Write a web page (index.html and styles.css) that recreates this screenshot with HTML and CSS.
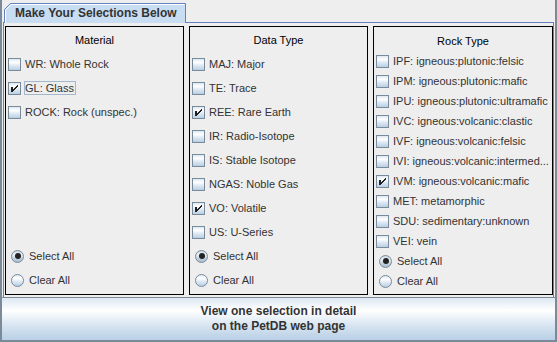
FILE: index.html
```html
<!DOCTYPE html>
<html>
<head>
<meta charset="utf-8">
<link rel="stylesheet" href="styles.css">
</head>
<body>
<div class="window">
  <div class="tabpane">
    <div class="tabrow">
      <div class="tab">
        <svg class="tab-bg" width="182" height="20" viewBox="0 0 182 20">
          <path d="M0 20 V6 L6 0 H182 V20 Z" fill="#C8DDF2"/>
          <path d="M0.5 20 V6.5 L6.5 0.5 H181.5 V20" fill="none" stroke="#6382BF" stroke-width="1"/>
          <path d="M1.5 20 V7 L7 1.5 H180.5" fill="none" stroke="#FFFFFF" stroke-width="1"/>
        </svg>
        <span class="tab-label">Make Your Selections Below</span>
      </div>
    </div>
    <div class="content">
      <section class="panel">
        <div class="ptitle">Material</div>
        <div class="row cb"><span class="box"></span><span>WR: Whole Rock</span></div>
        <div class="row cb"><span class="box"><svg class="check" width="13" height="13" viewBox="0 0 13 13"><rect x="3" y="5" width="2" height="5"/><rect x="5" y="7" width="1" height="2"/><rect x="6" y="6" width="1" height="2"/><rect x="7" y="5" width="1" height="2"/><rect x="8" y="4" width="1" height="2"/><rect x="9" y="3" width="1" height="2"/></svg></span><span class="focus">GL: Glass</span></div>
        <div class="row cb"><span class="box"></span><span>ROCK: Rock (unspec.)</span></div>
        <div class="radios">
          <div class="row rb"><span class="radio on"></span><span>Select All</span></div>
          <div class="row rb"><span class="radio"></span><span>Clear All</span></div>
        </div>
      </section>
      <section class="panel">
        <div class="ptitle">Data Type</div>
        <div class="row cb"><span class="box"></span><span>MAJ: Major</span></div>
        <div class="row cb"><span class="box"></span><span>TE: Trace</span></div>
        <div class="row cb"><span class="box"><svg class="check" width="13" height="13" viewBox="0 0 13 13"><rect x="3" y="5" width="2" height="5"/><rect x="5" y="7" width="1" height="2"/><rect x="6" y="6" width="1" height="2"/><rect x="7" y="5" width="1" height="2"/><rect x="8" y="4" width="1" height="2"/><rect x="9" y="3" width="1" height="2"/></svg></span><span>REE: Rare Earth</span></div>
        <div class="row cb"><span class="box"></span><span>IR: Radio-Isotope</span></div>
        <div class="row cb"><span class="box"></span><span>IS: Stable Isotope</span></div>
        <div class="row cb"><span class="box"></span><span>NGAS: Noble Gas</span></div>
        <div class="row cb"><span class="box"><svg class="check" width="13" height="13" viewBox="0 0 13 13"><rect x="3" y="5" width="2" height="5"/><rect x="5" y="7" width="1" height="2"/><rect x="6" y="6" width="1" height="2"/><rect x="7" y="5" width="1" height="2"/><rect x="8" y="4" width="1" height="2"/><rect x="9" y="3" width="1" height="2"/></svg></span><span>VO: Volatile</span></div>
        <div class="row cb"><span class="box"></span><span>US: U-Series</span></div>
        <div class="radios">
          <div class="row rb"><span class="radio on"></span><span>Select All</span></div>
          <div class="row rb"><span class="radio"></span><span>Clear All</span></div>
        </div>
      </section>
      <section class="panel rock">
        <div class="ptitle">Rock Type</div>
        <div class="row cb"><span class="box"></span><span>IPF: igneous:plutonic:felsic</span></div>
        <div class="row cb"><span class="box"></span><span>IPM: igneous:plutonic:mafic</span></div>
        <div class="row cb"><span class="box"></span><span>IPU: igneous:plutonic:ultramafic</span></div>
        <div class="row cb"><span class="box"></span><span>IVC: igneous:volcanic:clastic</span></div>
        <div class="row cb"><span class="box"></span><span>IVF: igneous:volcanic:felsic</span></div>
        <div class="row cb"><span class="box"></span><span>IVI: igneous:volcanic:intermed...</span></div>
        <div class="row cb"><span class="box"><svg class="check" width="13" height="13" viewBox="0 0 13 13"><rect x="3" y="5" width="2" height="5"/><rect x="5" y="7" width="1" height="2"/><rect x="6" y="6" width="1" height="2"/><rect x="7" y="5" width="1" height="2"/><rect x="8" y="4" width="1" height="2"/><rect x="9" y="3" width="1" height="2"/></svg></span><span>IVM: igneous:volcanic:mafic</span></div>
        <div class="row cb"><span class="box"></span><span>MET: metamorphic</span></div>
        <div class="row cb"><span class="box"></span><span>SDU: sedimentary:unknown</span></div>
        <div class="row cb"><span class="box"></span><span>VEI: vein</span></div>
        <div class="radios">
          <div class="row rb"><span class="radio on"></span><span>Select All</span></div>
          <div class="row rb"><span class="radio"></span><span>Clear All</span></div>
        </div>
      </section>
    </div>
  </div>
  <button class="detail">View one selection in detail<br>on the PetDB web page</button>
</div>
</body>
</html>
```

FILE: styles.css
```css
* { box-sizing: border-box; }
html, body { margin: 0; padding: 0; }
body {
  background: #EEEEEE;
  font-family: "Liberation Sans", Arial, sans-serif;
}
.window {
  width: 557px;
  height: 342px;
  background: #EEEEEE;
  border-left: 2px solid #7A8A99;
  border-right: 2px solid #7A8A99;
  border-bottom: 1px solid #7A8A99;
  display: flex;
  flex-direction: column;
  overflow: hidden;
}
.tabpane {
  padding: 0 1px;
}
.tabrow {
  height: 23px;
  padding-top: 3px;
  padding-left: 1px;
  display: flex;
  position: relative;
  z-index: 1;
}
.tab {
  position: relative;
  width: 182px;
  height: 20px;
}
.tab-bg {
  position: absolute;
  left: 0;
  top: 0;
  display: block;
}
.tab-label {
  position: relative;
  display: block;
  padding-left: 11px;
  padding-top: 1px;
  line-height: 18px;
  font-size: 12px;
  font-weight: bold;
  color: #333333;
  white-space: nowrap;
}
.content {
  margin-top: -1px;
  border-top: 1px solid #6382BF;
  border-left: 1px solid #6382BF;
  border-right: 1px solid #6382BF;
  padding: 3px 0 2px 1px;
  display: grid;
  grid-template-columns: 179px 179px 180px;
  column-gap: 5px;
}
.panel {
  height: 269px;
  border: 1px solid #000000;
  display: flex;
  flex-direction: column;
  padding: 1px 0 2px 0;
}
.panel.rock {
  padding: 4px 0 3px 0;
}
.ptitle {
  height: 24px;
  display: flex;
  align-items: center;
  justify-content: center;
  font-size: 11px;
  color: #000000;
}
.row {
  height: 24px;
  display: flex;
  align-items: center;
  font-size: 11px;
  color: #333333;
  white-space: nowrap;
}
.rock .ptitle, .rock .row {
  height: 20px;
}
.cb { padding-left: 2px; }
.rb { padding-left: 5px; }
.box {
  width: 13px;
  height: 13px;
  flex: none;
  margin-right: 4px;
  border: 1px solid #7A8A99;
  background: linear-gradient(to bottom, #DDE8F3 0%, #FFFFFF 30%, #DDE8F3 60%, #B8CFE5 100%);
  display: block;
}
.check {
  display: block;
  margin: -1px;
  fill: #222222;
  shape-rendering: crispEdges;
}
.focus {
  border: 1px solid #A3B8CC;
  margin-left: -1px;
  padding-right: 1px;
  line-height: 12px;
}
.radios {
  margin-top: auto;
}
.radio {
  width: 13px;
  height: 13px;
  flex: none;
  margin-right: 5px;
  border-radius: 50%;
  border: 1px solid #7A8A99;
  background: linear-gradient(to bottom, #DDE8F3 0%, #FFFFFF 30%, #DDE8F3 60%, #B8CFE5 100%);
  display: flex;
  align-items: center;
  justify-content: center;
}
.radio.on {
  background: linear-gradient(to bottom, #C9D6E2 0%, #EEF2F6 30%, #C9D6E2 60%, #A9BDD2 100%);
}
.radio.on::after {
  content: "";
  width: 6px;
  height: 6px;
  border-radius: 50%;
  background: #222222;
}
.detail {
  margin: 0;
  height: 44px;
  width: 100%;
  border: none;
  border-top: 1px solid #7A8A99;
  border-bottom: 1px solid #7A8A99;
  background: linear-gradient(to bottom, #DDE8F3 0%, #FFFFFF 30%, #DDE8F3 60%, #B8CFE5 100%);
  font-family: "Liberation Sans", Arial, sans-serif;
  font-size: 12px;
  font-weight: bold;
  line-height: 15px;
  color: #333333;
  text-align: center;
  padding: 0;
}
```
